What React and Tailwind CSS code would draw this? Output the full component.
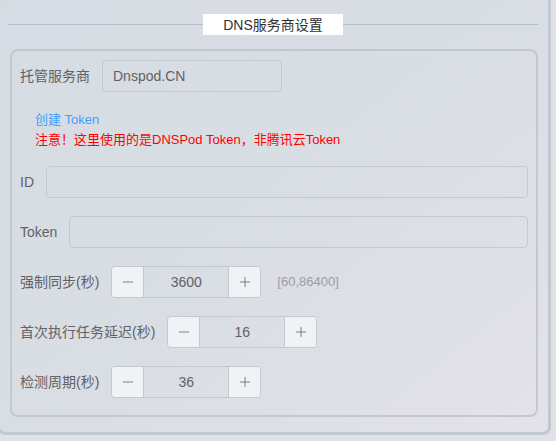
import { Minus, Plus } from 'lucide-react'

const FONT = { fontFamily: '"Liberation Sans", "Noto Sans CJK SC", sans-serif' }

function NumberBox({ value }) {
  return (
    <div className="flex h-8 w-[150px] overflow-hidden rounded border border-[#c4c9d0]">
      <button className="flex w-8 items-center justify-center border-r border-[#c4c9d0] bg-[#f1f2f5] text-[#606266]">
        <Minus size={16} strokeWidth={1.2} />
      </button>
      <div className="flex flex-1 items-center justify-center text-sm text-[#606266]">{value}</div>
      <button className="flex w-8 items-center justify-center border-l border-[#c4c9d0] bg-[#f1f2f5] text-[#606266]">
        <Plus size={16} strokeWidth={1.2} />
      </button>
    </div>
  )
}

function Row({ label, children }) {
  return (
    <div className="flex h-8 items-center">
      <span className="pr-3 text-sm text-[#606266]">{label}</span>
      {children}
    </div>
  )
}

export default function App() {
  return (
    <div className="h-[441px] w-[556px] overflow-hidden bg-[#dfe2e7]" style={FONT}>
      <div className="-ml-[3px] -mt-[6px] h-[441px] w-[554px] rounded-lg border-[3px] border-[#c3c7cf] bg-gradient-to-br from-[#d6dce3] via-[#d9dee4] to-[#e3e2e8]">
        {/* title */}
        <div className="ml-2 mr-[10px] mt-[17px] flex items-center">
          <div className="h-px flex-1 bg-[#b7bdc6]" />
          <div className="flex h-[21px] w-[140px] items-center justify-center bg-white text-sm text-[#303133]">DNS服务商设置</div>
          <div className="h-px flex-1 bg-[#b7bdc6]" />
        </div>

        <div className="ml-[10px] mt-[14px] h-[368px] w-[528px] rounded-lg border-2 border-[#c3c8cf] px-2 pt-[9px]">
          <Row label="托管服务商">
            <div className="flex h-8 w-[180px] items-center rounded border border-[#c4c9d0] px-[10px] text-sm text-[#606266]">Dnspod.CN</div>
          </Row>

          <div className="ml-[15px] mt-[18px] text-[13px] leading-5">
            <div className="text-[#409eff]">创建 Token</div>
            <div className="text-[#ff0000]">注意！这里使用的是DNSPod Token，非腾讯云Token</div>
          </div>

          <div className="mt-4 flex flex-col gap-[18px]">
            <Row label="ID">
              <div className="h-8 flex-1 rounded border border-[#c4c9d0]" />
            </Row>
            <Row label="Token">
              <div className="h-8 flex-1 rounded border border-[#c4c9d0]" />
            </Row>
            <Row label="强制同步(秒)">
              <NumberBox value="3600" />
              <span className="ml-4 text-[13px] text-[#9a9da4]">[60,86400]</span>
            </Row>
            <Row label="首次执行任务延迟(秒)">
              <NumberBox value="16" />
            </Row>
            <Row label="检测周期(秒)">
              <NumberBox value="36" />
            </Row>
          </div>
        </div>
      </div>
    </div>
  )
}
